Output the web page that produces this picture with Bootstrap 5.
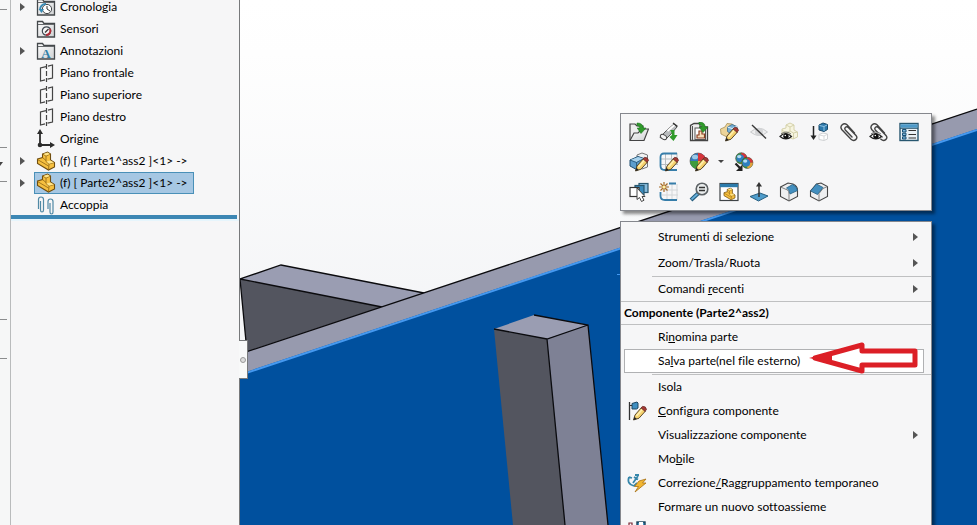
<!DOCTYPE html>
<html lang="it">
<head>
<meta charset="utf-8">
<meta name="viewport" content="width=device-width, initial-scale=1">
<title>Assieme</title>
<link href="https://cdn.jsdelivr.net/npm/bootstrap@5.3.0/dist/css/bootstrap.min.css" rel="stylesheet">
<style>
body { font-family: Lato, "Open Sans", sans-serif; font-size: 12px; line-height: 18px; font-variant-ligatures: none; color: #000; background: #f6f7f7; }
button { font: inherit; color: inherit; background: none; border: 0; padding: 0; text-align: left; }
svg { display: block; flex: none; }
.ico { width: 20px; height: 20px; }
.rail { width: 11px; border-right: 1px solid #b9bbbc; padding-right: 3px; }
.rail div { border-bottom: 1px solid #8b8d8e; }
.r1 { height: 10px; } .r2, .r4 { height: 138px; } .r3 { height: 34px; } .r5 { height: 39px; }
.tree { width: 229px; border-right: 1px solid #77797b; background: #f6f6f7; }
.tree ul { margin-top: -4px; }
.tree li { height: 22px; }
.twist { width: 23px; padding-left: 9px; }
.node { height: 22px; padding: 0 5px 0 1px; gap: 4px; border: 1px solid transparent; }
.node.picked { background: #a6c7e3; border-color: #4a90b8; }
.rollbar { height: 4px; margin: -1px 2px 0 0; background: #3d87b4; }
.rollglow { height: 2px; background: #e6f5fc; }
.viewport { min-width: 0; background: #fff; }
.scene { width: 100%; height: 100%; }
.splitter { top: 340px; left: -1px; width: 9px; height: 39px; background: #f8f9f9; border: 1px solid #77797b; border-left: 0; z-index: 2; }
.knob { width: 6px; height: 6px; border: 1px solid #999; border-radius: 50%; background: #ddd; }
.floating { top: 113px; left: 380px; width: 312px; gap: 10px; z-index: 3; }
.sheet { background: #f6f6f7; border: 1px solid #85878d; box-shadow: 3px 3px 3px rgba(0,0,0,.45); }
.tools { padding: 3px; }
.tool { width: 30px; height: 30px; padding: 5px; }
.tool.thin { width: 15px; padding: 5px 4px; }
.menu { padding-top: 2px; }
.entry { height: 24px; width: 100%; padding-right: 13px; }
.entry.tall { height: 26px; }
.entry .slot { width: 37px; padding-left: 6px; }
.entry.hot { width: auto; margin: 0 7px 1px 3px; background: #fff; border: 1px solid #b0b1b3; padding-right: 5px; }
.entry.hot .slot { width: 33px; }
.rule { height: 1px; background: #bfc0c1; }
.rule.inset { margin-left: 31px; }
.caption { height: 22px; line-height: 22px; padding-left: 3px; font-weight: 700; }
.callout { top: 227px; left: 187px; width: 112px; height: 36px; pointer-events: none; }
</style>
<script src="https://cdn.jsdelivr.net/npm/bootstrap@5.3.0/dist/js/bootstrap.bundle.min.js"></script>
</head>
<body class="vh-100 overflow-hidden">
<svg class="position-absolute" width="0" height="0" aria-hidden="true">
  <linearGradient id="sky" x1="0" y1="0" x2="0" y2="1"><stop offset="0" stop-color="#fff"/><stop offset=".1" stop-color="#fefefe"/><stop offset=".6" stop-color="#f4f5f7"/></linearGradient>
  <linearGradient id="folderFill" x1="0" y1="0" x2="1" y2="1"><stop offset="0" stop-color="#fff"/><stop offset="1" stop-color="#cfd1d3"/></linearGradient>
  <symbol id="tri" viewBox="0 0 5 8"><path d="M0 0L5 4L0 8Z" fill="#555"/></symbol>
  <symbol id="pencil" viewBox="0 0 20 20"><path d="M6.500 19L8 14L14.500 6.500L18.500 10L12 17.200Z" fill="#f6d26e" stroke="#4c3a1d" stroke-width=".9"/><path d="M9.500 15L15.500 8" stroke="#fff0b0" stroke-width="1.600"/><path d="M14 7L15.500 5.300Q19 5 19.500 8.500L18 10.400Z" fill="#a33a35" stroke="#5b2523" stroke-width=".6"/><path d="M6.500 19L7.500 15.800L9.800 18Z" fill="#222"/></symbol>
  <symbol id="arrowin" viewBox="0 0 20 20"><path d="M8 1Q14 1 14.2 6H17L12 11.5L8.2 6H10.8Q10.8 3.5 8 3.5Z" fill="#2f9a2a" stroke="#1c7220" stroke-width=".6"/></symbol>
  <symbol id="folder" viewBox="0 0 20 20"><path d="M1.5 18V2.500H6.500L8 4.500H18.500V18Z" fill="url(#folderFill)" stroke="#44484b" stroke-width="1.3"/><path d="M2 5.500H18" fill="none" stroke="#66696c" stroke-width="1"/></symbol>
  <symbol id="history" viewBox="0 0 20 20"><use href="#folder"/><circle cx="11" cy="12" r="4.6" fill="#fff" stroke="#44484b"/><path d="M11 9V12L14 14" fill="none" stroke="#333" stroke-width="1"/><path d="M4 13A5.5 5.5 0 0 1 10 7" fill="none" stroke="#3a8bb4" stroke-width="2"/><path d="M2.5 12L8 12L5.5 16Z" fill="#3a8bb4"/></symbol>
  <symbol id="sensor" viewBox="0 0 20 20"><use href="#folder"/><circle cx="10.5" cy="12" r="4.2" fill="#f6f6f6" stroke="#3e4750" stroke-width="1.2"/><path d="M14 10A4.2 4.2 0 0 1 10 16" fill="none" stroke="#b22e38" stroke-width="2"/><path d="M9 13.500L12.5 10" stroke="#333" stroke-width="1.2"/></symbol>
  <symbol id="notes" viewBox="0 0 20 20"><use href="#folder"/><text x="10" y="16.5" text-anchor="middle" font-family="Liberation Serif, serif" font-weight="700" font-size="13" fill="#2f80a8">A</text></symbol>
  <symbol id="plane" viewBox="0 0 20 20"><path d="M10 3.600L4.500 5V18L9 16.800M11.500 16.200L16.500 15V2L12 3.100" fill="none" stroke="#444" stroke-width="1.200"/><path d="M10.500 1V19" stroke="#444" stroke-width="1.200" stroke-dasharray="5 2"/></symbol>
  <symbol id="origin" viewBox="0 0 20 20"><path d="M4 3V16H17" fill="none" stroke="#2c2c2c" stroke-width="1.8"/><path d="M1 5L4 0L7 5ZM14 13L19 16L14 19Z" fill="#2c2c2c"/><circle cx="4" cy="16" r="2.3" fill="#2c2c2c"/></symbol>
  <symbol id="part" viewBox="0 0 20 20"><path d="M1.500 8L6.500 6.500V3L11.500 1L14.500 3V9L18.500 11.500V16L12.500 19L1.500 12.500Z" fill="#f6c040" stroke="#6f4d10" stroke-width="1.100"/><path d="M6.500 3L10 5L14.500 3M10 5V10.500L13 13L18.500 11.500M6.500 6.500L10 9.500M13 13L12.500 19M1.500 8.500L12.500 15" fill="none" stroke="#8d6515" stroke-width=".8"/><path d="M7.500 3L11.500 1.600L14 3L10 4.500ZM10.500 10.500L14.500 9.500L18 11.500L13 12.700Z" fill="#ffe58b"/></symbol>
  <symbol id="mates" viewBox="0 0 20 20"><path d="M2.500 14V4.500Q2.500 2 5 2T7.500 4.500V15Q7.500 17 6 17T4.500 15V6" fill="none" stroke="#5089a5" stroke-width="1.200"/><path d="M12 14V6.500Q12 4 14.500 4T17 6.500V17Q17 19 15.500 19T14 17V8" fill="none" stroke="#5089a5" stroke-width="1.200"/></symbol>
  <symbol id="open" viewBox="0 0 20 20"><path d="M1 18V2H6L8 4H14V8" fill="#eee" stroke="#444" stroke-width="1.200"/><path d="M1 18.500L5 11H9L13 7H19.500L15 18.500Z" fill="url(#folderFill)" stroke="#444" stroke-width="1.200"/><use href="#arrowin"/></symbol>
  <symbol id="lighten" viewBox="0 0 20 20"><path d="M1 15.500L5 11L7.500 8.500L15 2L18 5L11 13L6.500 17.500Z" fill="#b9bcbe" stroke="#555" stroke-width="1"/><path d="M8.500 9L15.500 3" stroke="#fff" stroke-width="2"/><ellipse cx="4.500" cy="15" rx="3.400" ry="2.200" transform="rotate(30 4.500 15)" fill="#f4f4f4" stroke="#444"/><path d="M14 1L18.500 4.500" stroke="#333" stroke-width="1.500"/><path d="M11 8H15.500V13H18.500L14.500 19L10.500 15L13 13Q13 10 11 8Z" fill="#2f9a2a"/></symbol>
  <symbol id="libopen" viewBox="0 0 20 20"><path d="M1.500 18.500V3.500L5 1.500H11V5H18.500V18.500Z" fill="#eee" stroke="#444" stroke-width="1.300"/><path d="M3.500 4V18" stroke="#555"/><rect x="6" y="6" width="10.500" height="11.500" fill="#fff" stroke="#555" stroke-width="1"/><path d="M8 16V13H10V9H13V12H15.500V16Z" fill="#f7dfbc" stroke="#8a3c20" stroke-width="1.200"/><use href="#arrowin" x="2" y="-1"/></symbol>
  <symbol id="editpart" viewBox="0 0 20 20"><path d="M1.500 7L6 5L8 1.500L13 2L17 5V11L10 16L2 12Z" fill="#ecd49a" stroke="#aa9055" stroke-width=".8"/><path d="M8.500 5L13 2.500L18 4.500V9L12 12L8.500 9.500Z" fill="#75aed4" stroke="#376b8f" stroke-width=".8"/><path d="M8.500 5L13 6.500L18 4.500" fill="none" stroke="#e8f5fb"/><use href="#pencil"/></symbol>
  <symbol id="hide" viewBox="0 0 20 20"><path d="M1.500 10Q10 2.500 18.500 10Q10 17 1.500 10Z" fill="#eeeeef" stroke="#c8cacc"/><circle cx="10" cy="10" r="4" fill="#d4d5d7"/><path d="M3 3L17 16.500" stroke="#393939" stroke-width="1.400"/></symbol>
  <symbol id="eye" viewBox="0 0 20 20"><path d="M1 14.500Q6.500 8.500 12.500 14.500Q7 19.500 1 14.500Z" fill="#fff" stroke="#222" stroke-width="1.200"/><circle cx="7" cy="14.300" r="2.700" fill="#111"/><path d="M2 12Q7 8 12 12" fill="none" stroke="#555" stroke-width=".8"/><circle cx="6.300" cy="13.500" r=".8" fill="#fff"/></symbol>
  <symbol id="ghost" viewBox="0 0 20 20"><path d="M7 3L11 1L15 3V8L18.500 10V15L14 17L8 15L3 13V7L7 6Z" fill="#f7f5e0" stroke="#d5d2ac"/><path d="M7 3L11 5L15 3M11 5V9L14.500 11L18.500 10M11 9L7 11L3 8M14.500 11V17" fill="none" stroke="#d5d2ac"/><use href="#eye"/></symbol>
  <symbol id="reorder" viewBox="0 0 20 20"><path d="M4.500 4V16" stroke="#222" stroke-width="1.500"/><path d="M1.500 13.500L4.500 18L7.500 13.500Z" fill="#222"/><path d="M10 3L14 1L18.500 2.500V7.500L15 9.500L10 8Z" fill="#2b78ab" stroke="#174a6c"/><path d="M10.500 3.500L15 4.500L18 3M15 4.500V9" fill="none" stroke="#90c3e3"/><path d="M10 12.500L14 11L18.500 12V17L15 18.500L10 17.500Z" fill="#fff" stroke="#d0d2d4"/><path d="M10.500 13L15 14L18 12.500M15 14V18" fill="none" stroke="#d8d9da"/></symbol>
  <symbol id="clip" viewBox="0 0 20 20"><path d="M15.500 11L8 2.800Q5.500 .7 3.200 2.800T2.700 7.500L12 17.300Q14.500 19.500 16.700 17.600T17 13.500L9.300 5.500Q7.800 4.200 6.500 5.300T6.300 8L13 15" fill="none" stroke="#444" stroke-width="1.400" stroke-linecap="round"/></symbol>
  <symbol id="clipeye" viewBox="0 0 20 20"><use href="#clip"/><ellipse cx="7" cy="14" rx="6" ry="4" fill="#f6f6f7"/><use href="#eye"/></symbol>
  <symbol id="props" viewBox="0 0 20 20"><rect x="1" y="1.500" width="18" height="17" fill="#e8f0f5" stroke="#27566f" stroke-width="1.400"/><path d="M1.500 4H18.500" stroke="#4d9aca" stroke-width="3.500"/><path d="M1 6.300H19" stroke="#27566f"/><path d="M9.500 8.500H17M9.500 12.500H17M9.500 16H17" stroke="#333" stroke-width="1.200"/><path d="M3.500 7.500H7V10H3.500ZM3.500 11.200H7V13.500H3.500ZM3.500 14.800H7V17H3.500Z" fill="#7fb8dc" stroke="#174f75"/></symbol>
  <symbol id="bluebox" viewBox="0 0 20 20"><path d="M8 3L13 1L18.500 3V15L13 17L8 15Z" fill="#f1f2f3" stroke="#777"/><path d="M1 8L9 4.500L15 6.500V13L7.500 17.500L1 14Z" fill="#5d9ece" stroke="#214f70"/><path d="M1.500 7.900L9 5L14.500 6.500L7.500 10Z" fill="#a9d2ec"/><path d="M1 8L7.500 10.500L15 6.500M7.500 10.500V17" fill="none" stroke="#214f70" stroke-width=".8"/><use href="#pencil"/></symbol>
  <symbol id="grid" viewBox="0 0 20 20"><path d="M6.500 2V18M12.500 2V18M2 7H19M2 12.500H19M18 1V13" stroke="#b9bec1" fill="none"/><path d="M18 1.500H5Q1.500 1.500 1.500 5V14Q1.500 18 6 18H18" fill="none" stroke="#367da9" stroke-width="1.800"/></symbol>
  <symbol id="editsketch" viewBox="0 0 20 20"><use href="#grid"/><use href="#pencil"/></symbol>
  <symbol id="ball" viewBox="0 0 20 20"><circle cx="9" cy="9" r="8" fill="#3478bb" stroke="#444" stroke-width=".6"/><path d="M9 9V1A8 8 0 0 1 17 9Z" fill="#d5343b"/><path d="M9 9H1A8 8 0 0 0 9 17Z" fill="#3f9b3c"/><path d="M9 9V17A8 8 0 0 0 17 9Z" fill="#e2b33c"/><ellipse cx="6" cy="5" rx="3" ry="2.300" fill="#b7def1" opacity=".8"/></symbol>
  <symbol id="ballblue" viewBox="0 0 20 20"><circle cx="9" cy="9" r="8" fill="#3f9b3c" stroke="#333" stroke-width=".8"/><path d="M9 9V1A8 8 0 0 1 17 9Z" fill="#d5343b"/><path d="M9 9V17A8 8 0 0 0 17 9Z" fill="#e2a33c"/><circle cx="7.500" cy="9" r="5.500" fill="#2f7fc0"/><ellipse cx="6" cy="6.500" rx="3" ry="2.300" fill="#b7def1"/></symbol>
  <symbol id="appearance" viewBox="0 0 20 20"><use href="#ball"/><use href="#pencil"/></symbol>
  <symbol id="copylook" viewBox="0 0 20 20"><use href="#ballblue" x="1" y="0" width="14" height="14"/><use href="#ballblue" x="7" y="4.500" width="14" height="14"/><path d="M1.500 11.500L6 16" stroke="#222" stroke-width="2.200"/><path d="M8.500 12.500V19H2Z" fill="#222"/></symbol>
  <symbol id="selother" viewBox="0 0 20 20"><rect x="10" y="1.500" width="9" height="9" fill="#87bcdd" stroke="#27566f" stroke-width="1.200"/><rect x="6" y="3.500" width="9" height="9" fill="#398abc" stroke="#27566f" stroke-width="1.200"/><rect x="1" y="5.500" width="9" height="9" fill="#fff" stroke="#333" stroke-width="1.200"/><path d="M8 6V17.500L10.500 15.500L12.500 19.500L15 18.200L13 14.500H16Z" fill="#fff" stroke="#444"/></symbol>
  <symbol id="newsketch" viewBox="0 0 20 20"><path d="M8 2V18M13 2V18M3 8H19M3 13H19M18 2V18" stroke="#d3d6d8" fill="none"/><path d="M10 1.500H17M1.500 10V14Q1.500 18 6 18H18" fill="none" stroke="#367da9" stroke-width="1.800"/><path d="M5 0V10M0 5H10M1.500 1.500L8.500 8.500M8.500 1.500L1.500 8.500" stroke="#a56b28" stroke-width="1.200"/><circle cx="5" cy="5" r="1.600" fill="#fff2a6"/></symbol>
  <symbol id="magnify" viewBox="0 0 20 20"><path d="M2 18L9 11.500" stroke="#245c7d" stroke-width="4"/><path d="M2.500 17.300L8.500 12" stroke="#68b0dc" stroke-width="1.800"/><circle cx="13" cy="7" r="5.800" fill="#e9eced" stroke="#5d6265" stroke-width="1.600"/><path d="M10 5.500H16M10 8.500H16" stroke="#333" stroke-width="1.600"/></symbol>
  <symbol id="winpart" viewBox="0 0 20 20"><rect x="1" y="1.500" width="18" height="17" fill="#fff" stroke="#3e4346" stroke-width="1.200"/><path d="M1 3.500H19" stroke="#2d7cac" stroke-width="3.400"/><use href="#part" x="4" y="5.500" width="13" height="13"/></symbol>
  <symbol id="normal" viewBox="0 0 20 20"><path d="M1 14.500L11 11L19 14L9.500 19Z" fill="#4e9ccb" stroke="#285f80"/><path d="M10 3V15" stroke="#333" stroke-width="1.500"/><path d="M7 4.500L10 0L13 4.500Z" fill="#333"/></symbol>
  <symbol id="fillet" viewBox="0 0 20 20"><path d="M1.500 5L9 1L14 2Q18.500 4 18.500 8V14.500L10 19L1.500 14.500Z" fill="#eeeff0" stroke="#444" stroke-width="1.100"/><path d="M1.500 5L8.500 8Q10 9 10 12V19" fill="none" stroke="#777" stroke-width=".9"/><path d="M7.500 6L13.500 2.500Q18 4 18.500 8.500L11 12Q10.500 7.500 7.500 6Z" fill="#438fbf" stroke="#285f80" stroke-width=".8"/></symbol>
  <symbol id="chamfer" viewBox="0 0 20 20"><path d="M1.500 9L7.500 2L12 1L18.500 4.500V14.500L10 19L1.500 14.500Z" fill="#eeeff0" stroke="#444" stroke-width="1.100"/><path d="M10 19V11.500L14 6.500L18.500 4.500" fill="none" stroke="#777" stroke-width=".9"/><path d="M1.500 9L7.500 2L14 5.500L8.500 12.500Z" fill="#438fbf" stroke="#285f80" stroke-width=".8"/></symbol>
  <symbol id="configure" viewBox="0 0 20 20"><path d="M2.500 1V19" stroke="#333" stroke-width="1.300"/><path d="M5 2.500L10 1L11 2V7L9.500 8H5Z" fill="#3f8fc1" stroke="#1d4864"/><path d="M2 4.500H5" stroke="#333"/><use href="#pencil"/></symbol>
  <symbol id="anchor" viewBox="0 0 20 20"><path d="M2 4Q-.5 11 7 13M2 4L5 5M6 10L11 3M7 4L11 6.500M8 2H12M7 13L10 10" stroke="#3686aa" stroke-width="1.800" fill="none"/><path d="M12 8L19 6L15.500 10H19L8 19L11.500 13.500H7.500Z" fill="#f2b632" stroke="#a87012" stroke-width=".8"/></symbol>
  <symbol id="saveas" viewBox="0 0 20 20"><path d="M2 9V2H5V9" fill="#fff" stroke="#7b2632" stroke-width="1.200"/><rect x="10" y="1" width="8" height="8" fill="#438fbf" stroke="#173f58" stroke-width="1.400"/><path d="M12 1H16V4H12Z" fill="#fff"/></symbol>
</svg>

<div class="d-flex h-100">
  <aside class="rail flex-shrink-0"><div class="r1"></div><div class="r2"></div><div class="r3 d-flex align-items-center"><svg width="3" height="5" viewBox="0 0 3 5"><path d="M0 0H3L0 4Z" fill="#444"/></svg></div><div class="r4"></div><div class="r5"></div></aside>

  <nav class="tree flex-shrink-0" aria-label="Albero di disegno">
    <ul class="list-unstyled mb-0">
      <li class="d-flex align-items-center"><span class="twist"><svg width="5" height="8"><use href="#tri"/></svg></span><button class="node d-flex align-items-center"><svg class="ico"><use href="#history"/></svg>Cronologia</button></li>
      <li class="d-flex align-items-center"><span class="twist"></span><button class="node d-flex align-items-center"><svg class="ico"><use href="#sensor"/></svg>Sensori</button></li>
      <li class="d-flex align-items-center"><span class="twist"><svg width="5" height="8"><use href="#tri"/></svg></span><button class="node d-flex align-items-center"><svg class="ico"><use href="#notes"/></svg>Annotazioni</button></li>
      <li class="d-flex align-items-center"><span class="twist"></span><button class="node d-flex align-items-center"><svg class="ico"><use href="#plane"/></svg>Piano frontale</button></li>
      <li class="d-flex align-items-center"><span class="twist"></span><button class="node d-flex align-items-center"><svg class="ico"><use href="#plane"/></svg>Piano superiore</button></li>
      <li class="d-flex align-items-center"><span class="twist"></span><button class="node d-flex align-items-center"><svg class="ico"><use href="#plane"/></svg>Piano destro</button></li>
      <li class="d-flex align-items-center"><span class="twist"></span><button class="node d-flex align-items-center"><svg class="ico"><use href="#origin"/></svg>Origine</button></li>
      <li class="d-flex align-items-center"><span class="twist"><svg width="5" height="8"><use href="#tri"/></svg></span><button class="node d-flex align-items-center"><svg class="ico"><use href="#part"/></svg>(f) [ Parte1^ass2 ]&lt;1&gt; -&gt;</button></li>
      <li class="d-flex align-items-center"><span class="twist"><svg width="5" height="8"><use href="#tri"/></svg></span><button class="node picked d-flex align-items-center"><svg class="ico"><use href="#part"/></svg>(f) [ Parte2^ass2 ]&lt;1&gt; -&gt;</button></li>
      <li class="d-flex align-items-center"><span class="twist"></span><button class="node d-flex align-items-center"><svg class="ico"><use href="#mates"/></svg>Accoppia</button></li>
    </ul>
    <div class="rollbar"></div>
    <div class="rollglow"></div>
  </nav>

  <main class="viewport flex-grow-1 position-relative">
    <svg class="scene" viewBox="240 0 737 525" preserveAspectRatio="xMinYMin slice" role="img" aria-label="Modello 3D">
      <rect x="240" width="737" height="525" fill="url(#sky)"/>
      <path d="M240 279L281 265L424 293L382 307Z" fill="#9a9db2"/>
      <path d="M240 279L382 307L247 353Z" fill="#53555f"/>
      <path d="M240 279L247 352M240 279L281 265L424 293M240 279L382 307" fill="none" stroke="#0b0b0e" stroke-width="1.300"/>
      <path d="M240 354L977 109V130L240 375Z" fill="#979aae"/>
      <path d="M240 354L977 109" stroke="#0b0b0e" stroke-width="1.300"/>
      <path d="M240 374L977 129V525H240Z" fill="#00509e"/>
      <path d="M240 375L977 130" stroke="#4599f0" stroke-width="2"/>
      <path d="M494 329L534 315L588 325L547 339Z" fill="#9a9db2"/>
      <path d="M494 329L547 339L565 525H513Z" fill="#53555f"/>
      <path d="M547 339L588 325L608 525H565Z" fill="#7e8195"/>
      <path d="M534 315L588 325L608 525M494 329L547 339L588 325M547 339L565 525" fill="none" stroke="#0b0b0e" stroke-width="1.300"/>
      <path d="M617 274.500H620" stroke="#4599f0"/>
    </svg>
    <div class="splitter position-absolute d-flex align-items-center justify-content-center"><span class="knob"></span></div>

    <div class="floating position-absolute d-flex flex-column">
      <div class="sheet tools" role="toolbar" aria-label="Comandi contestuali">
        <div class="d-flex">
          <button class="tool" aria-label="Apri parte"><svg class="ico"><use href="#open"/></svg></button>
          <button class="tool" aria-label="Imposta peso ridotto"><svg class="ico"><use href="#lighten"/></svg></button>
          <button class="tool" aria-label="Apri disegno"><svg class="ico"><use href="#libopen"/></svg></button>
          <button class="tool" aria-label="Modifica parte"><svg class="ico"><use href="#editpart"/></svg></button>
          <button class="tool" aria-label="Nascondi"><svg class="ico"><use href="#hide"/></svg></button>
          <button class="tool" aria-label="Trasparenza"><svg class="ico"><use href="#ghost"/></svg></button>
          <button class="tool" aria-label="Sospendi"><svg class="ico"><use href="#reorder"/></svg></button>
          <button class="tool" aria-label="Accoppia"><svg class="ico"><use href="#clip"/></svg></button>
          <button class="tool" aria-label="Visualizza accoppiamenti"><svg class="ico"><use href="#clipeye"/></svg></button>
          <button class="tool" aria-label="Proprietà"><svg class="ico"><use href="#props"/></svg></button>
        </div>
        <div class="d-flex">
          <button class="tool" aria-label="Modifica funzione"><svg class="ico"><use href="#bluebox"/></svg></button>
          <button class="tool" aria-label="Modifica schizzo"><svg class="ico"><use href="#editsketch"/></svg></button>
          <button class="tool" aria-label="Aspetto"><svg class="ico"><use href="#appearance"/></svg></button>
          <button class="tool thin" aria-label="Altri aspetti"><svg width="6" height="20" viewBox="0 0 6 20"><path d="M0 8H6L3 11Z" fill="#444"/></svg></button>
          <button class="tool" aria-label="Copia aspetto"><svg class="ico"><use href="#copylook"/></svg></button>
        </div>
        <div class="d-flex">
          <button class="tool" aria-label="Seleziona altro"><svg class="ico"><use href="#selother"/></svg></button>
          <button class="tool" aria-label="Schizzo"><svg class="ico"><use href="#newsketch"/></svg></button>
          <button class="tool" aria-label="Zoom sulla selezione"><svg class="ico"><use href="#magnify"/></svg></button>
          <button class="tool" aria-label="Anteprima componente"><svg class="ico"><use href="#winpart"/></svg></button>
          <button class="tool" aria-label="Normale a"><svg class="ico"><use href="#normal"/></svg></button>
          <button class="tool" aria-label="Raccordo"><svg class="ico"><use href="#fillet"/></svg></button>
          <button class="tool" aria-label="Smusso"><svg class="ico"><use href="#chamfer"/></svg></button>
        </div>
      </div>

      <div class="sheet menu d-flex flex-column" role="menu">
        <button class="entry tall d-flex align-items-center" role="menuitem"><span class="slot"></span>Strumenti di selezione<svg class="ms-auto" width="5" height="8"><use href="#tri"/></svg></button>
        <button class="entry tall d-flex align-items-center" role="menuitem"><span class="slot"></span>Zoom/Trasla/Ruota<svg class="ms-auto" width="5" height="8"><use href="#tri"/></svg></button>
        <div class="rule inset"></div>
        <button class="entry d-flex align-items-center" role="menuitem"><span class="slot"></span><span>Comandi <u>r</u>ecenti</span><svg class="ms-auto" width="5" height="8"><use href="#tri"/></svg></button>
        <div class="rule"></div>
        <div class="caption">Componente (Parte2^ass2)</div>
        <div class="rule"></div>
        <button class="entry d-flex align-items-center" role="menuitem"><span class="slot"></span><span>Ri<u>n</u>omina parte</span></button>
        <button class="entry hot d-flex align-items-center" role="menuitem"><span class="slot"></span><span>Sa<u>l</u>va parte(nel file esterno)</span></button>
        <div class="rule inset"></div>
        <button class="entry d-flex align-items-center" role="menuitem"><span class="slot"></span>Isola</button>
        <button class="entry d-flex align-items-center" role="menuitem"><span class="slot"><svg class="ico"><use href="#configure"/></svg></span><span><u>C</u>onfigura componente</span></button>
        <button class="entry d-flex align-items-center" role="menuitem"><span class="slot"></span>Visualizzazione componente<svg class="ms-auto" width="5" height="8"><use href="#tri"/></svg></button>
        <button class="entry d-flex align-items-center" role="menuitem"><span class="slot"></span><span>Mo<u>b</u>ile</span></button>
        <button class="entry d-flex align-items-center" role="menuitem"><span class="slot"><svg class="ico"><use href="#anchor"/></svg></span><span>Correzione<u>/</u>Raggruppamento temporaneo</span></button>
        <button class="entry d-flex align-items-center" role="menuitem"><span class="slot"></span>Formare un nuovo sottoassieme</button>
        <button class="entry d-flex align-items-center" role="menuitem" aria-label="Salva"><span class="slot"><svg class="ico"><use href="#saveas"/></svg></span></button>
      </div>

      <svg class="callout position-absolute" viewBox="0 0 112 36" aria-hidden="true"><path d="M8 18L55 5V11H108V25H55V31Z" fill="#fff" stroke="#dc1f26" stroke-width="5" stroke-linejoin="round"/><path d="M2 18L25 12V23Z" fill="#dc1f26"/></svg>
    </div>
  </main>
</div>
</body>
</html>
